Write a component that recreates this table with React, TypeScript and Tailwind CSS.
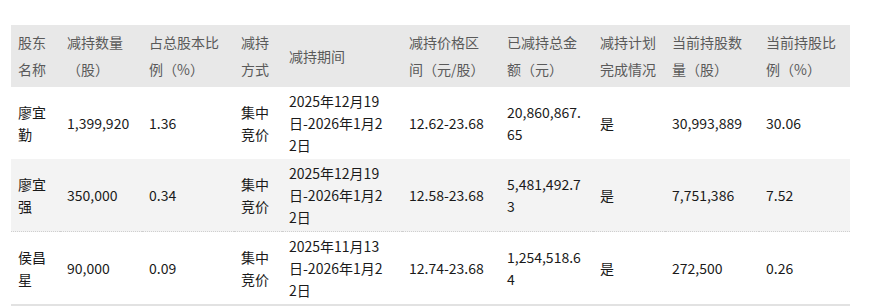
const headers = [
  "股东名称",
  "减持数量（股）",
  "占总股本比例（%）",
  "减持方式",
  "减持期间",
  "减持价格区间（元/股）",
  "已减持总金额（元）",
  "减持计划完成情况",
  "当前持股数量（股）",
  "当前持股比例（%）",
];

// column width + right padding (some columns are tighter so the text wraps as in the source)
const cols = [
  "w-[49px] pr-[7px]",
  "w-[82px] pr-[7px]",
  "w-[92px] pr-[7px]",
  "w-[48px] pr-[7px]",
  "w-[120px] pr-[16px]",
  "w-[98px] pr-[11px]",
  "w-[93px] pr-[7px]",
  "w-[72px] pr-[7px]",
  "w-[94px] pr-[7px]",
  "w-[91px] pr-[7px]",
];

const rows = [
  {
    cells: ["廖宜勤", "1,399,920", "1.36", "集中竞价", "2025年12月19日-2026年1月22日", "12.62-23.68", "20,860,867.65", "是", "30,993,889", "30.06"],
    tone: "bg-white",
  },
  {
    cells: ["廖宜强", "350,000", "0.34", "集中竞价", "2025年12月19日-2026年1月22日", "12.58-23.68", "5,481,492.73", "是", "7,751,386", "7.52"],
    tone: "bg-[#f3f3f3] border-b border-dotted border-[#cfcfcf]",
  },
  {
    cells: ["侯昌星", "90,000", "0.09", "集中竞价", "2025年11月13日-2026年1月22日", "12.74-23.68", "1,254,518.64", "是", "272,500", "0.26"],
    tone: "bg-white border-b-2 border-[#e2e2e2]",
  },
];

export default function App() {
  return (
    <div
      className="w-[871px] h-[308px] bg-white pt-[25px] pl-[11px]"
      style={{ fontFamily: '"Microsoft YaHei", "Noto Sans CJK SC", "Noto Sans", sans-serif' }}
    >
      <table className="table-fixed w-[839px] border-collapse text-[14px] break-all">
        <thead>
          <tr className="bg-[#e8e8e8]">
            {headers.map((h, i) => (
              <th
                key={h}
                className={`${cols[i]} pl-[7px] py-1 text-left align-middle font-normal leading-[27px] text-[#5a5a5a]`}
              >
                {h}
              </th>
            ))}
          </tr>
        </thead>
        <tbody>
          {rows.map((r) => (
            <tr key={r.cells[0]} className={r.tone}>
              {r.cells.map((c, i) => (
                <td key={i} className={`${cols[i]} pl-[7px] py-[3px] align-middle leading-[22px] text-[#1a1a1a]`}>
                  {c}
                </td>
              ))}
            </tr>
          ))}
        </tbody>
      </table>
    </div>
  );
}
